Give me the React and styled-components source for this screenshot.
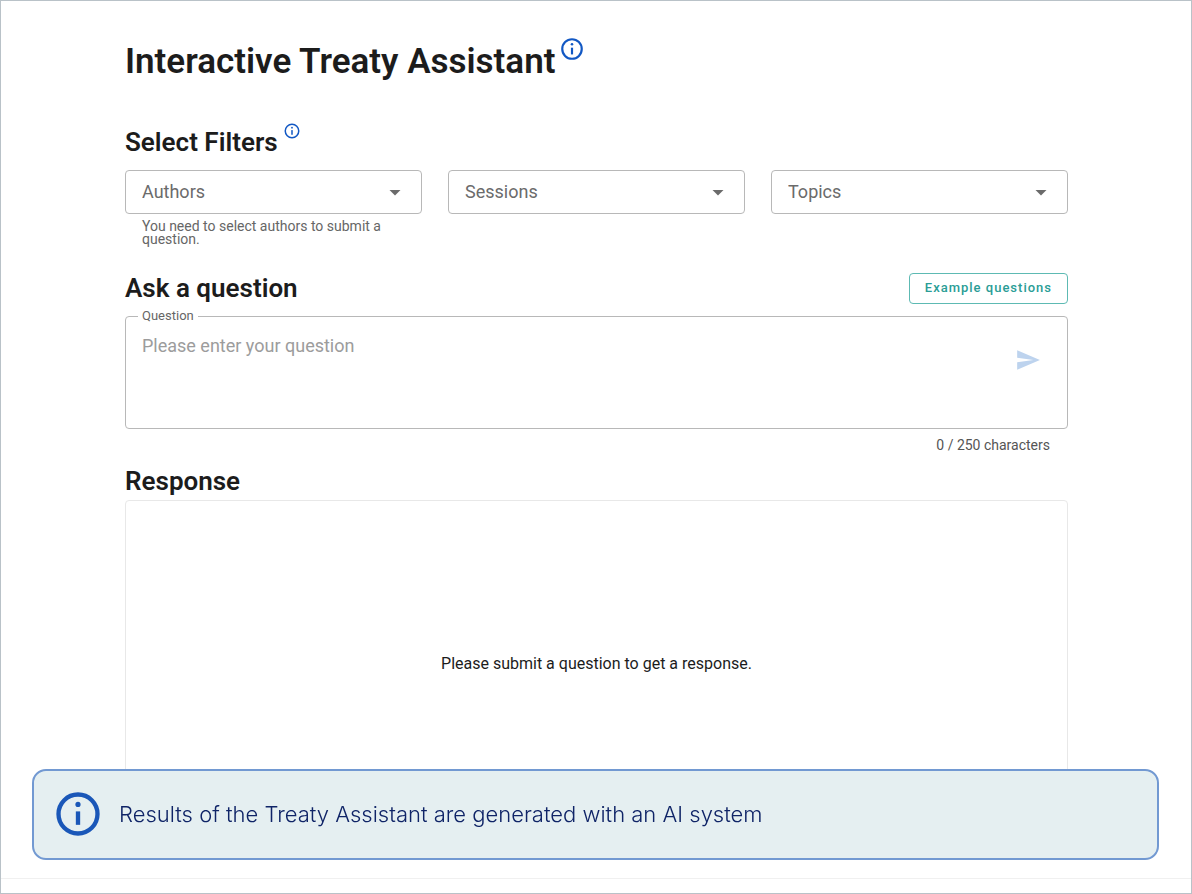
import React, { useState } from "react";
import styled, { createGlobalStyle } from "styled-components";

const GlobalStyle = createGlobalStyle`
  *, *::before, *::after { box-sizing: border-box; }
  body {
    margin: 0;
    background: #fff;
    color: #1c1c1c;
    font-family: Roboto, "Liberation Sans", sans-serif;
  }
  button, select, textarea { font-family: inherit; }
`;

const Page = styled.div`
  display: flex;
  flex-direction: column;
  min-height: 100vh;
  border: 1px solid #b9c2c8;
`;

const Main = styled.main`
  flex: 1;
  display: flex;
  flex-direction: column;
  padding: 39px 123px 50px 124px;
`;

const Title = styled.h1`
  display: flex;
  gap: 4px;
  margin: 0 0 42px;
  font-size: 35px;
  line-height: 44px;
  font-weight: 600;
`;

const Heading = styled.h2`
  display: flex;
  gap: 5px;
  margin: 0;
  font-size: 26px;
  line-height: 32px;
  font-weight: 600;
`;

const InfoButton = styled.button`
  display: flex;
  align-self: flex-start;
  margin: -4px 0 0;
  padding: 0;
  border: 0;
  background: none;
  color: #1258c4;
`;

const Filters = styled.div`
  display: grid;
  grid-template-columns: repeat(3, 1fr);
  gap: 26px;
  margin-top: 12px;
`;

const SelectBox = styled.div`
  position: relative;
  color: #6b6b6b;

  svg {
    position: absolute;
    top: 10px;
    right: 15px;
    pointer-events: none;
  }
`;

const Select = styled.select`
  display: block;
  width: 100%;
  height: 44px;
  padding: 0 40px 2px 16px;
  appearance: none;
  border: 1px solid #b8b8b8;
  border-radius: 4px;
  background: #fff;
  color: inherit;
  font-size: 18px;
`;

const Hint = styled.p`
  margin: 6px 17px 0;
  color: #666;
  font-size: 14px;
  line-height: 13px;
`;

const HeadingRow = styled.div`
  display: flex;
  align-items: center;
  justify-content: space-between;
  margin: 26px 0 12px;
`;

const ExampleButton = styled.button`
  height: 31px;
  padding: 0 15px 1px;
  border: 1px solid #5dbab3;
  border-radius: 4px;
  background: #fff;
  color: #2a9d96;
  font-size: 13px;
  font-weight: 500;
  letter-spacing: 1px;
`;

const QuestionBox = styled.div`
  position: relative;
  display: flex;
  align-items: flex-start;
  height: 113px;
  border: 1px solid #b8b8b8;
  border-radius: 4px;
`;

const QuestionLabel = styled.label`
  position: absolute;
  top: -9px;
  left: 12px;
  padding: 0 4px;
  background: #fff;
  color: #666;
  font-size: 13px;
  line-height: 16px;
`;

const QuestionInput = styled.textarea`
  flex: 1;
  height: 100%;
  padding: 18px 16px;
  border: 0;
  outline: 0;
  resize: none;
  background: none;
  color: #1c1c1c;
  font-size: 18px;
  line-height: 22px;

  &::placeholder { color: #9c9c9c; opacity: 1; }
`;

const SendButton = styled.button`
  display: flex;
  margin: 30px 26px 0 0;
  padding: 0;
  border: 0;
  background: none;
  color: #bdd3ee;
`;

const Counter = styled.p`
  margin: 8px 18px 12px;
  color: #555;
  font-size: 14px;
  line-height: 16px;
  text-align: right;
`;

const Response = styled.section`
  flex: 1;
  display: flex;
  align-items: center;
  justify-content: center;
  min-height: 240px;
  margin-top: 3px;
  border: 1px solid #e8e8e8;
  border-radius: 4px;
  font-size: 16px;
  line-height: 20px;
`;

const Footer = styled.footer`
  height: 15px;
  border-top: 1px solid #f0f0f0;
`;

const Banner = styled.aside`
  position: fixed;
  left: 32px;
  right: 33px;
  bottom: 34px;
  display: flex;
  align-items: center;
  gap: 15px;
  min-height: 91px;
  padding: 0 18px 1px;
  border: 2px solid #7299d2;
  border-radius: 14px;
  background: rgba(228, 238, 241, 0.97);
  color: #0f2467;
  font-family: Inter, "Liberation Sans", sans-serif;
  font-size: 22px;
  font-weight: 300;
  line-height: 28px;

  svg { color: #1a57b8; }
`;

function InfoIcon({ size }) {
  return (
    <svg width={size} height={size} viewBox="0 0 24 24" aria-hidden="true">
      <circle cx="12" cy="12" r="9" fill="none" stroke="currentColor" strokeWidth="2" />
      <circle cx="12" cy="7.600" r="1.200" fill="currentColor" />
      <rect x="11" y="10.800" width="2" height="6.200" fill="currentColor" />
    </svg>
  );
}

function Filter({ name, hint }) {
  const hintId = hint ? `${name}-hint` : undefined;
  return (
    <div>
      <SelectBox>
        <Select aria-label={name} aria-describedby={hintId}>
          <option>{name}</option>
        </Select>
        <svg width="24" height="24" viewBox="0 0 24 24" aria-hidden="true">
          <path d="M6.500 10h11l-5.500 5.500z" fill="currentColor" />
        </svg>
      </SelectBox>
      {hint && <Hint id={hintId}>{hint}</Hint>}
    </div>
  );
}

export default function App() {
  const [question, setQuestion] = useState("");

  return (
    <Page>
      <GlobalStyle />
      <Main>
        <Title>
          Interactive Treaty Assistant
          <InfoButton aria-label="About the assistant">
            <InfoIcon size={26} />
          </InfoButton>
        </Title>

        <Heading>
          Select Filters
          <InfoButton aria-label="About filters">
            <InfoIcon size={18} />
          </InfoButton>
        </Heading>
        <Filters>
          <Filter name="Authors" hint="You need to select authors to submit a question." />
          <Filter name="Sessions" />
          <Filter name="Topics" />
        </Filters>

        <HeadingRow>
          <Heading>Ask a question</Heading>
          <ExampleButton>Example questions</ExampleButton>
        </HeadingRow>
        <QuestionBox>
          <QuestionLabel htmlFor="question">Question</QuestionLabel>
          <QuestionInput
            id="question"
            maxLength={250}
            placeholder="Please enter your question"
            value={question}
            onChange={(e) => setQuestion(e.target.value)}
          />
          <SendButton aria-label="Send" disabled={!question}>
            <svg width="26" height="26" viewBox="0 0 24 24" aria-hidden="true">
              <path d="M2.010 21 23 12 2.010 3 2 10l15 2-15 2z" fill="currentColor" />
            </svg>
          </SendButton>
        </QuestionBox>
        <Counter>{question.length} / 250 characters</Counter>

        <Heading>Response</Heading>
        <Response>Please submit a question to get a response.</Response>
      </Main>
      <Footer />
      <Banner>
        <InfoIcon size={52} />
        Results of the Treaty Assistant are generated with an AI system
      </Banner>
    </Page>
  );
}
